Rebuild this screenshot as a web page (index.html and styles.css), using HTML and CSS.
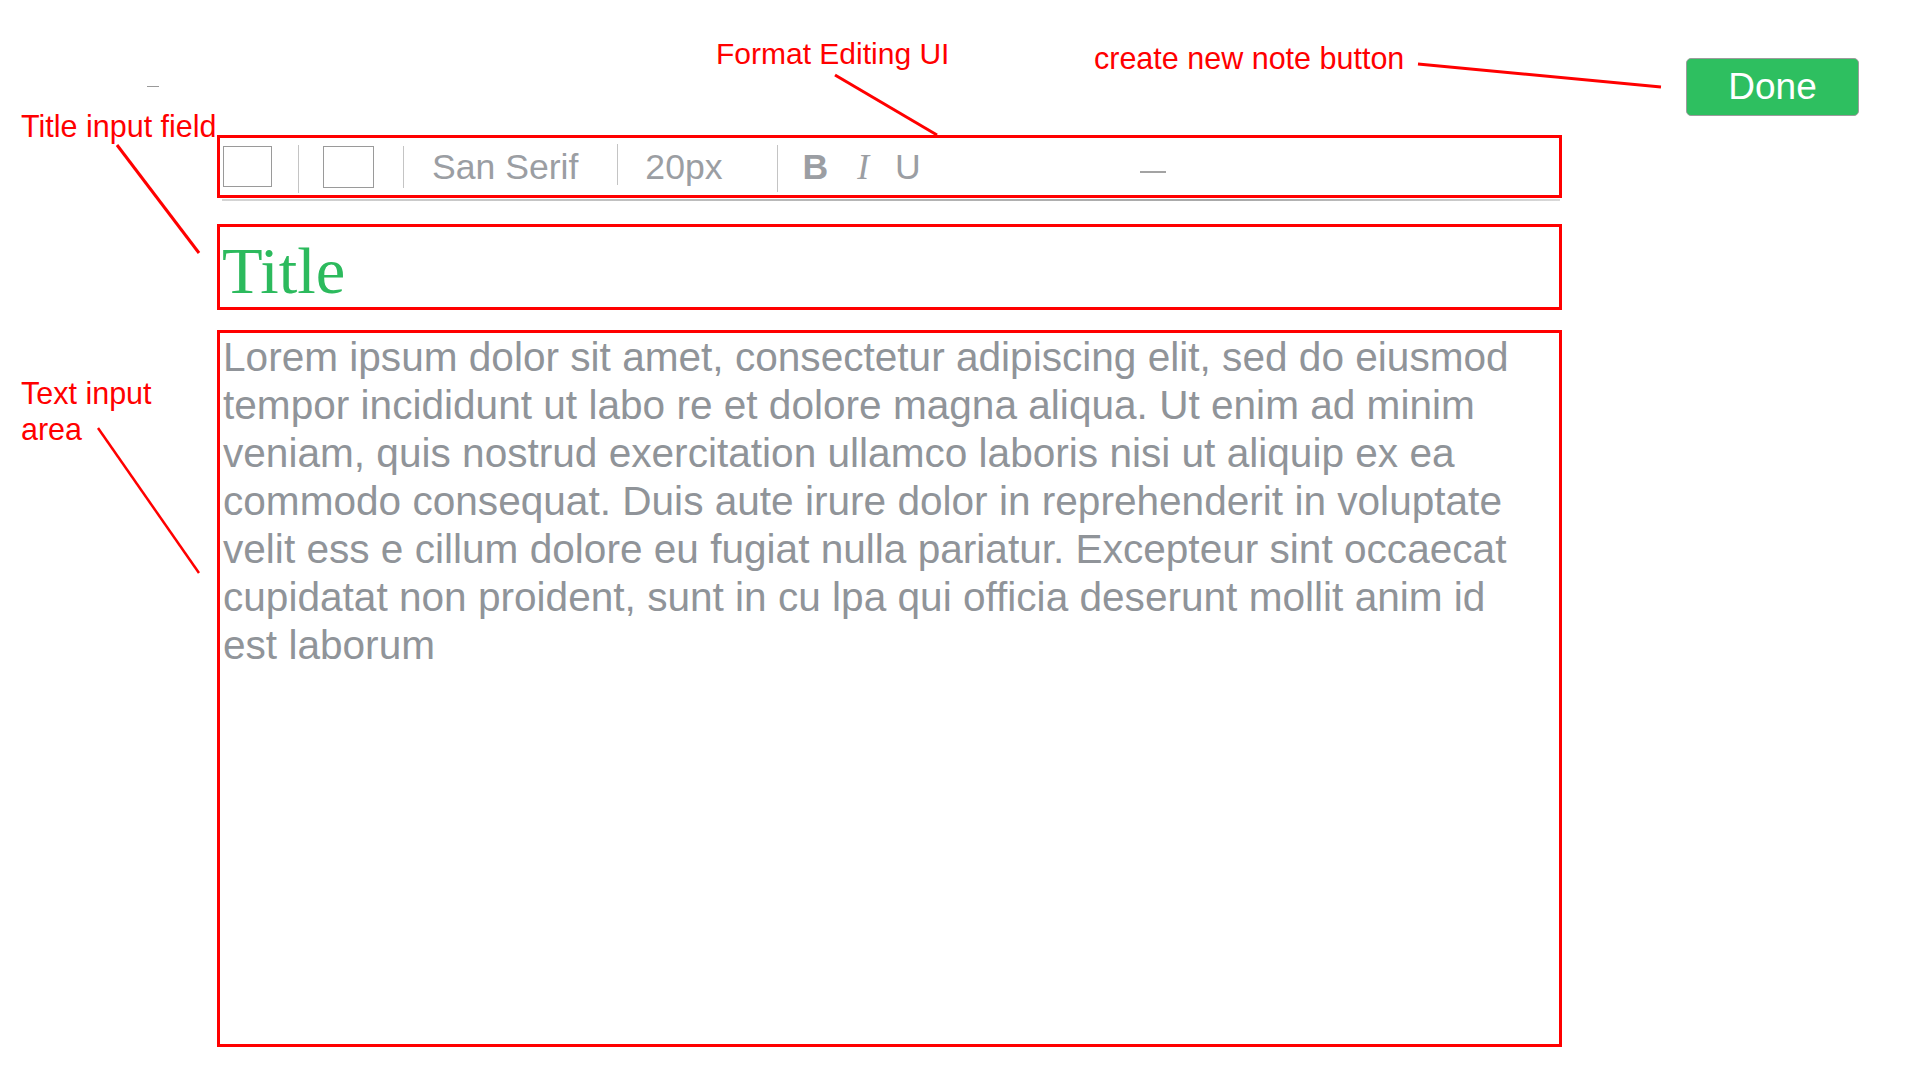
FILE: index.html
```html
<!DOCTYPE html>
<html lang="en">
<head>
<meta charset="utf-8">
<title>Note editor wireframe</title>
<link rel="stylesheet" href="styles.css">
</head>
<body>
<div class="page">
  <div class="editor">
    <div class="toolbar">
      <span class="swatch swatch-a"></span>
      <span class="sep sep-1"></span>
      <span class="swatch swatch-b"></span>
      <span class="sep sep-2"></span>
      <span class="tool-text font-name">San Serif</span>
      <span class="sep sep-3"></span>
      <span class="tool-text font-size">20px</span>
      <span class="sep sep-4"></span>
      <span class="tool-text tool-bold">B</span>
      <span class="tool-text tool-italic">I</span>
      <span class="tool-text tool-underline">U</span>
      <span class="tool-dash"></span>
    </div>
    <div class="toolbar-shadow"></div>
    <div class="title-field">Title</div>
    <div class="body-field">Lorem ipsum dolor sit amet, consectetur adipiscing elit, sed do eiusmod tempor incididunt ut labo re et dolore magna aliqua. Ut enim ad minim veniam, quis nostrud exercitation ullamco laboris nisi ut aliquip ex ea commodo consequat. Duis aute irure dolor in reprehenderit in voluptate velit ess e cillum dolore eu fugiat nulla pariatur. Excepteur sint occaecat cupidatat non proident, sunt in cu lpa qui officia deserunt mollit anim id est laborum</div>
  </div>
  <button class="done-btn" type="button">Done</button>
</div>

<span class="stray-dash"></span>

<div class="note note-title">Title input field</div>
<div class="note note-format">Format Editing UI</div>
<div class="note note-create">create new note button</div>
<div class="note note-text">Text input<br>area</div>

<svg class="leaders" width="1920" height="1080" viewBox="0 0 1920 1080" aria-hidden="true">
  <line x1="117" y1="145" x2="199" y2="253" class="lead"/>
  <line x1="835" y1="75" x2="937" y2="135" class="lead"/>
  <line x1="1418" y1="64" x2="1661" y2="87" class="lead"/>
  <line x1="98" y1="428" x2="199" y2="573" class="lead thin"/>
</svg>
</body>
</html>
```

FILE: styles.css
```css
html, body {
  margin: 0;
  padding: 0;
  background: #ffffff;
}

body {
  width: 1920px;
  height: 1080px;
  position: relative;
  overflow: hidden;
  font-family: "Liberation Sans", Arial, Helvetica, sans-serif;
}

.page {
  display: flex;
  align-items: flex-start;
  padding: 58px 0 0 217px;
}

.editor {
  width: 1345px;
  margin-top: 77px;
  display: flex;
  flex-direction: column;
}

/* ---------- toolbar ---------- */
.toolbar {
  box-sizing: border-box;
  height: 63px;
  border: 3px solid #ff0000;
  display: flex;
  align-items: center;
}

.swatch {
  display: block;
  box-sizing: border-box;
  border: 1px solid #9a9a9a;
  background: #fff;
}

.swatch-a {
  width: 49px;
  height: 41px;
  margin-left: 3px;
}

.swatch-b {
  width: 51px;
  height: 42px;
  margin-left: 24px;
}

.sep {
  display: block;
  width: 1px;
  background: #c4c4c4;
}

.sep-1 { height: 48px; margin-left: 26px; margin-top: 5px; }
.sep-2 { height: 42px; margin-left: 29px; }
.sep-3 { height: 41px; margin-left: 39px; margin-top: -4px; }
.sep-4 { height: 47px; margin-left: 54px; margin-top: 3px; }

.tool-text {
  display: block;
  font-size: 35.6px;
  line-height: 40px;
  color: #9b9ea3;
  white-space: nowrap;
}

.font-name { margin-left: 28px; }
.font-size { margin-left: 27px; }

.tool-bold {
  font-weight: bold;
  margin-left: 25px;
}

.tool-italic {
  font-family: "Liberation Serif", "Times New Roman", serif;
  font-style: italic;
  margin-left: 29px;
}

.tool-underline {
  margin-left: 26px;
}

.tool-dash {
  display: block;
  width: 26px;
  height: 2px;
  background: #a3a3a3;
  margin-left: 219px;
  margin-top: 11px;
}

.toolbar-shadow {
  height: 2px;
  margin: 1px 2px 0 5px;
  background: linear-gradient(to right, #d4d4d4, #b9b9b9 40%, #a8a8a8 75%, #d8d8d8);
}

/* ---------- title ---------- */
.title-field {
  margin-top: 23px;
  box-sizing: border-box;
  height: 86px;
  border: 3px solid #ff0000;
  padding: 8px 0 0 2px;
  font-family: "Liberation Serif", "Times New Roman", serif;
  font-size: 66.5px;
  line-height: 72px;
  color: #2cba5d;
}

/* ---------- body text ---------- */
.body-field {
  margin-top: 20px;
  box-sizing: border-box;
  height: 717px;
  border: 3px solid #ff0000;
  padding: 0 30px 0 3px;
  font-size: 40.6px;
  line-height: 48px;
  color: #909499;
}

/* ---------- done button ---------- */
.done-btn {
  margin-left: 124px;
  box-sizing: border-box;
  width: 173px;
  height: 58px;
  border: 1px solid #9c9c9c;
  border-radius: 5px;
  background: #2ebf60;
  color: #ffffff;
  font-family: "Liberation Sans", Arial, Helvetica, sans-serif;
  font-size: 37px;
  line-height: 56px;
  padding: 0;
  text-align: center;
}

/* ---------- annotations ---------- */
.stray-dash {
  position: absolute;
  left: 147px;
  top: 86px;
  width: 12px;
  height: 1px;
  background: #9a9a9a;
}

.note {
  position: absolute;
  font-family: "Liberation Sans", Arial, Helvetica, sans-serif;
  font-size: 30.5px;
  line-height: 30px;
  color: #ff0000;
  white-space: nowrap;
}

.note-title { left: 21px; top: 111px; }
.note-format { left: 716px; top: 39px; font-size: 30px; }
.note-create { left: 1094px; top: 43px; }
.note-text { left: 21px; top: 375px; line-height: 36px; }

.leaders {
  position: absolute;
  left: 0;
  top: 0;
  pointer-events: none;
}

.lead {
  stroke: #ff0000;
  stroke-width: 3;
}

.lead.thin {
  stroke-width: 2.5;
}
```
